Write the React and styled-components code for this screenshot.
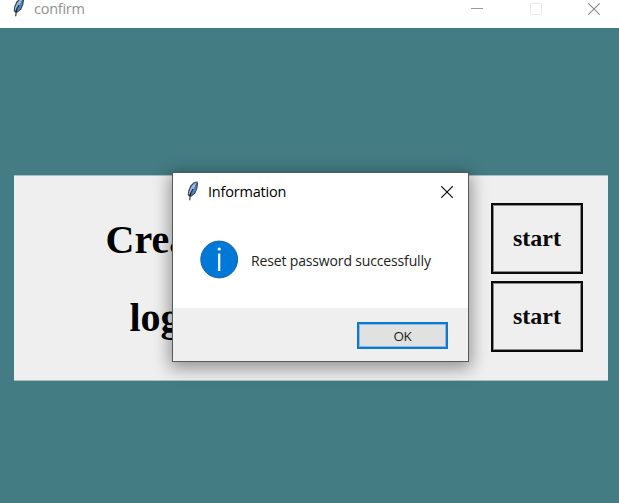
import React from "react";
import styled, { createGlobalStyle } from "styled-components";

const GlobalStyle = createGlobalStyle`
  * { box-sizing: border-box; }
  body { margin: 0; overflow: hidden; }
`;

const Window = styled.div`
  position: relative;
  width: 619px;
  height: 503px;
  overflow: hidden;
  background: #447c83;
  font-family: "Open Sans", "Noto Sans", sans-serif;
`;

const TitleBar = styled.header`
  display: flex;
  align-items: flex-start;
  height: 28px;
  padding-left: 11px;
  background: #fff;
`;

const Feather = styled.svg`
  flex: none;
  width: 15px;
  height: 20px;
  margin-top: ${(p) => p.$top}px;
`;

const Title = styled.h2`
  flex: 1;
  margin: ${(p) => p.$top}px 0 0 8px;
  font-size: 14.5px;
  font-weight: 400;
  line-height: 18px;
  letter-spacing: ${(p) => p.$spacing}px;
  color: ${(p) => p.$color};
  white-space: nowrap;
`;

const Controls = styled.div`
  display: flex;
  gap: 46.5px;
  padding: 3px 19px 0 0;
`;

const Glyph = styled.svg`
  flex: none;
  display: block;
  width: 12px;
  height: 12px;
  fill: none;
`;

const Panel = styled.main`
  display: grid;
  grid-template-columns: 1fr 92px;
  grid-template-rows: 71px 71px;
  row-gap: 7px;
  width: 594px;
  height: 204px;
  margin: 148px 0 0 14px;
  padding: 27px 25px 0 0;
  background: #efefef;
  box-shadow: 0 -1px 0 #a9c0c3, 0 1px 0 #a9c0c3;
  font-family: "Liberation Serif", serif;
`;

const Heading = styled.h1`
  margin: 0;
  padding: 0 0 0 ${(p) => p.$left}px;
  font-size: 40px;
  line-height: 74px;
  color: #000;
`;

const StartButton = styled.button`
  padding: 0 0 1px;
  border: 2px solid #0a0a0a;
  background: transparent;
  box-shadow: inset 0 0 0 1px #8c8c8c;
  font: bold 24px "Liberation Serif", serif;
  color: #0a0a0a;
`;

const Dialog = styled.section`
  position: absolute;
  left: 172px;
  top: 172px;
  display: flex;
  flex-direction: column;
  width: 297px;
  height: 190px;
  border: 1px solid #555b5c;
  background: #fff;
  box-shadow: 0 4px 16px 2px rgba(0, 0, 0, 0.4);
`;

const DialogBar = styled.div`
  display: flex;
  height: 38px;
  padding: 0 15px 0 12px;
`;

const CloseButton = styled.button`
  width: 12px;
  height: 12px;
  margin: 13px 0 0;
  padding: 0;
  border: 0;
  background: none;
`;

const Message = styled.div`
  display: flex;
  flex: 1;
  align-items: center;
  gap: 12px;
  padding: 0 0 0 27px;
  font-size: 14px;
  letter-spacing: -0.15px;
  color: #222;
  white-space: nowrap;
`;

const MessageText = styled.p`
  margin: 2px 0 0;
`;

const InfoIcon = styled.svg`
  flex: none;
  width: 39px;
  height: 39px;
`;

const Footer = styled.footer`
  display: flex;
  justify-content: flex-end;
  height: 53px;
  padding: 13px 20px 0 0;
  background: #efefef;
`;

const OkButton = styled.button`
  width: 91px;
  height: 27px;
  margin-top: 1px;
  padding: 0;
  border: 2px solid #0a7ad8;
  background: #e1e1e1;
  box-shadow: inset 0 0 0 1px #8fb9df;
  font: 13.5px "Open Sans", sans-serif;
  letter-spacing: -0.3px;
  color: #222;
`;

function FeatherIcon({ top }) {
  return (
    <Feather viewBox="0 0 15 20" $top={top} aria-hidden="true">
      <path d="M12.300.3 8.500 1.500 5.300 4.800 3.300 9.500 2.700 14l1.400 1.500h2.600l3.600-3.200 2-4.500.8-5z" fill="#35424f" />
      <path d="M11.800 1.300 8.800 2.700 6.100 6l-1.900 4.500-.5 3.200 2-1 3.800-6z" fill="#9dbbe0" />
      <path d="M11.800 2.500 9 7 6 13l.6 1.400 3-2.800 1.800-4z" fill="#4c82c8" />
      <path d="M8 8 5.500 12.500 4.700 19.300" fill="none" stroke="#20252d" strokeWidth="1.100" />
    </Feather>
  );
}

function CloseGlyph({ color }) {
  return (
    <Glyph viewBox="0 0 12 12" stroke={color} strokeWidth="1.100">
      <path d="M.3.3l11.400 11.400M11.700.3.3 11.700" />
    </Glyph>
  );
}

export default function App() {
  return (
    <>
      <GlobalStyle />
      <Window>
        <TitleBar>
          <FeatherIcon top={-3} />
          <Title as="span" $top={0} $spacing={-0.25} $color="#929292">confirm</Title>
          <Controls>
            <Glyph viewBox="0 0 12 12" stroke="#999"><path d="M0 5.500h12" /></Glyph>
            <Glyph viewBox="0 0 12 12" stroke="#e8e8e8"><path d="M.5.500h11v11H.5z" /></Glyph>
            <CloseGlyph color="#888" />
          </Controls>
        </TitleBar>
        <Panel>
          <Heading $left={91.5}>Create</Heading>
          <StartButton>start</StartButton>
          <Heading $left={115.5}>login</Heading>
          <StartButton>start</StartButton>
        </Panel>
        <Dialog role="dialog">
          <DialogBar>
            <FeatherIcon top={8} />
            <Title $top={10} $spacing={-0.2} $color="#000">Information</Title>
            <CloseButton aria-label="Close"><CloseGlyph color="#000" /></CloseButton>
          </DialogBar>
          <Message>
            <InfoIcon viewBox="0 0 39 39">
              <circle cx="19.200" cy="19.500" r="18.400" fill="#0078d7" stroke="#1d629d" />
              <path d="M19.200 13.500v17.500" stroke="#fff" strokeWidth="2.200" />
              <circle cx="19.200" cy="9" r="1.600" fill="#fff" />
            </InfoIcon>
            <MessageText>Reset password successfully</MessageText>
          </Message>
          <Footer><OkButton>OK</OkButton></Footer>
        </Dialog>
      </Window>
    </>
  );
}
